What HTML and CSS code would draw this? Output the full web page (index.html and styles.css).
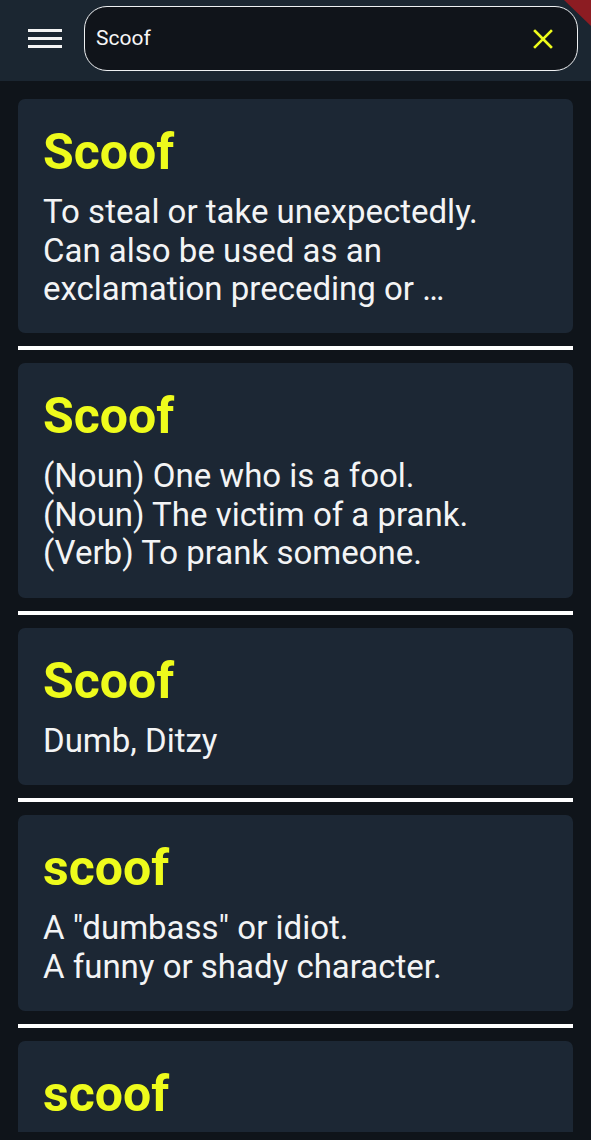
FILE: index.html
```html
<!DOCTYPE html>
<html lang="en">
<head>
<meta charset="utf-8">
<title>Scoof</title>
<link rel="stylesheet" href="styles.css">
</head>
<body>
<div class="app">
  <header class="topbar">
    <button class="menu-btn" aria-label="Menu">
      <span class="bar"></span><span class="bar"></span><span class="bar"></span>
    </button>
    <div class="search">
      <span class="search-text">Scoof</span>
      <svg class="clear" viewBox="0 0 20 20" width="20" height="20" aria-hidden="true">
        <path d="M2 2 L18 18 M18 2 L2 18" stroke="#eefb1c" stroke-width="2.6" stroke-linecap="square" fill="none"/>
      </svg>
    </div>
    <div class="corner"></div>
  </header>
  <div class="viewport">
    <main class="list">
      <article class="card">
        <h2 class="word">Scoof</h2>
        <p class="def">To steal or take unexpectedly.<br>Can also be used as an exclamation preceding or …</p>
      </article>
      <hr class="divider">
      <article class="card">
        <h2 class="word">Scoof</h2>
        <p class="def">(Noun) One who is a fool.<br>(Noun) The victim of a prank.<br>(Verb) To prank someone.</p>
      </article>
      <hr class="divider">
      <article class="card">
        <h2 class="word">Scoof</h2>
        <p class="def">Dumb, Ditzy</p>
      </article>
      <hr class="divider">
      <article class="card">
        <h2 class="word">scoof</h2>
        <p class="def">A "dumbass" or idiot.<br>A funny or shady character.</p>
      </article>
      <hr class="divider">
      <article class="card card-partial">
        <h2 class="word">scoof</h2>
      </article>
    </main>
  </div>
</div>
</body>
</html>
```

FILE: styles.css
```css
* { box-sizing: border-box; }

html, body {
  margin: 0;
  padding: 0;
  background: #0f141a;
  font-family: Roboto, "Noto Sans", Arial, sans-serif;
  color: #f3f4f5;
}

.app {
  height: 1140px;
  display: flex;
  flex-direction: column;
  overflow: hidden;
}

.topbar {
  position: relative;
  height: 81px;
  flex: none;
  background: #1b2631;
  display: flex;
  align-items: flex-start;
  padding: 6px 13px 0 28px;
  gap: 22px;
  overflow: hidden;
}

.menu-btn {
  margin-top: 23px;
  width: 34px;
  height: 19px;
  padding: 0;
  border: 0;
  background: transparent;
  display: flex;
  flex-direction: column;
  justify-content: space-between;
}

.bar {
  display: block;
  height: 3px;
  width: 34px;
  background: #f4f4f4;
}

.search {
  flex: 1;
  height: 65px;
  border: 1.5px solid #eef0f2;
  border-radius: 23px;
  background: #10141a;
  display: flex;
  align-items: center;
  padding: 0 24px 0 11px;
}

.search-text {
  flex: 1;
  font-size: 21px;
  color: #f6f6f6;
  padding-bottom: 1px;
}

.clear {
  flex: none;
}

.corner {
  position: absolute;
  top: 0;
  right: 0;
  width: 27px;
  height: 26px;
  background: #8c1c22;
  clip-path: polygon(0 0, 100% 0, 100% 100%);
}

.viewport {
  flex: 1;
  min-height: 0;
  padding-bottom: 8px;
  display: flex;
  flex-direction: column;
}

.list {
  flex: 1;
  min-height: 0;
  overflow: hidden;
  padding: 18px 18px 0;
  display: flex;
  flex-direction: column;
  gap: 13px;
}

.card {
  flex: none;
  background: #1c2734;
  border-radius: 7px;
  padding: 24px 25px 25px;
}

.card-partial {
  min-height: 160px;
}

.word {
  margin: 0 0 11.5px;
  font-size: 50px;
  font-weight: 700;
  line-height: 1.172;
  color: #eefb1c;
}

.def {
  margin: 0;
  font-size: 33px;
  line-height: 38.4px;
  color: #f3f4f5;
}

.divider {
  flex: none;
  margin: 0;
  height: 4px;
  border: 0;
  background: #ffffff;
}
```
